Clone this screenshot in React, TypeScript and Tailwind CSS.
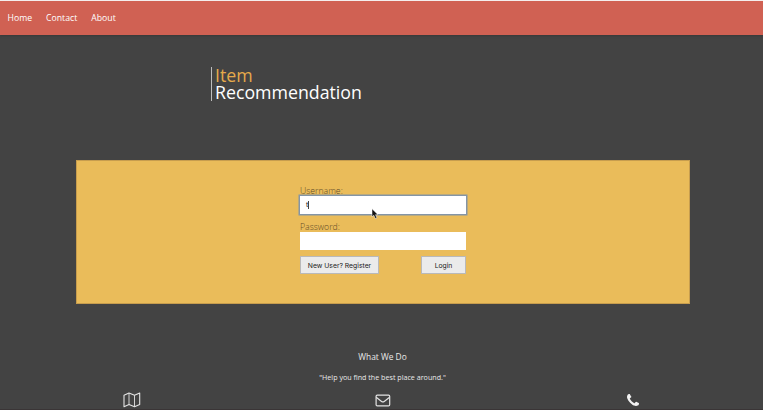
import React from "react";

const MapIcon = () => (
  <svg width="18" height="16" viewBox="0 0 18 16" fill="none" stroke="#e4e4e4" strokeWidth="1.1" strokeLinejoin="round">
    <path d="M1 3.2 6 1l5.5 2.2L16.7 1v11.6l-5.2 2.2L6 12.6 1 14.8z" />
    <path d="M6 1v11.6M11.5 3.2v11.6" strokeWidth="0.9" />
  </svg>
);

const MailIcon = () => (
  <svg width="16" height="13" viewBox="0 0 16 13" fill="none" stroke="#e4e4e4" strokeWidth="1.2" strokeLinejoin="round">
    <rect x="1.1" y="1.1" width="13.6" height="10.8" rx="1.2" />
    <path d="M1.2 3.3 6.6 7.4q1.3 1 2.6 0l5.4-4.1" />
  </svg>
);

const PhoneIcon = () => (
  <svg width="12" height="12" viewBox="0 0 1408 1408" fill="#f2f2f2">
    <path d="M1408 1112q0 27-10 70.5t-21 68.5q-21 50-122 106-94 51-186 51-27 0-53-3.5t-57.5-12.5-47-14.5-55.5-20.5-49-18q-98-35-175-83-127-79-264-216t-216-264q-48-77-83-175-3-9-18-49t-20.5-55.5-14.5-47-12.5-57.5-3.5-53q0-92 51-186 56-101 106-122 25-11 68.5-21t70.5-10q14 0 21 3 18 6 53 76 11 19 30 54t35 63.5 31 53.5q3 4 17.5 25t21.5 35.5 7 28.5q0 20-28.5 50t-62 55-62 53-28.5 46q0 9 5 22.5t8.5 20.5 14 24 11.5 19q76 137 174 235t235 174q2 1 19 11.5t24 14 20.5 8.5 22.5 5q18 0 46-28.5t53-62 55-62 50-28.5q14 0 28.5 7t35.5 21.5 25 17.5q25 15 53.5 31t63.5 35 54 30q70 35 76 53 3 7 3 21z" />
  </svg>
);

const Cursor = () => (
  <svg className="absolute left-[71px] top-[12px]" width="8" height="12" viewBox="0 0 8 12">
    <path d="M1 .8v8l1.8-1.5 1.5 3.3 1.6-.7-1.4-3.2H7z" fill="#151515" stroke="#fff" strokeWidth=".5" />
  </svg>
);

export default function App() {
  return (
    <div className="flex h-[410px] w-full flex-col overflow-hidden border-t border-[#f4eeed] bg-[#434343] font-['Open_Sans',sans-serif] text-white">
      <nav className="flex h-[34px] shrink-0 items-center gap-[14px] bg-[#d06153] pb-px pl-[7.5px] text-[8.7px] leading-3 shadow-[0_1px_2px_#383838]">
        <a>Home</a>
        <a>Contact</a>
        <a>About</a>
      </nav>
      <header className="ml-[211px] mt-8 h-[34px] w-fit shrink-0 border-l border-[#bdbdbd] pl-[3px] text-[17.75px] leading-[17px]">
        <div className="text-[#e5aa4b]">Item</div>
        <div>Recommendation</div>
      </header>
      <main className="ml-[76px] mt-[59px] h-[144px] w-[614px] shrink-0 border border-[#c79d4e] bg-[#eabc5a] pl-[223px] pt-[25px]">
        <form className="w-[166px] text-[8.7px] font-light leading-[10px] text-[#5f4b28]">
          <label className="block">Username:</label>
          <div className="relative flex h-[18px] items-center bg-white pl-[6px] font-['Liberation_Sans',sans-serif] text-[7.5px] font-normal text-[#222] shadow-[0_0_0_1.5px_#8495a6]">
            t<span className="h-2 w-px bg-[#444]" />
            <Cursor />
          </div>
          <label className="mt-2 block">Password:</label>
          <div className="h-[18px] bg-white" />
          <div className="mt-[6px] flex justify-between font-['Inter',sans-serif] text-[6.8px] font-normal text-[#222]">
            <button type="button" className="h-[18px] w-[79px] whitespace-nowrap border border-[#b9b9b9] bg-[#ebebeb] pt-px">New User? Register</button>
            <button type="button" className="h-[18px] w-[45px] border border-[#b9b9b9] bg-[#ebebeb] pt-px">Login</button>
          </div>
        </form>
      </main>
      <section className="mt-[47px] shrink-0 pl-[2px] text-center text-[#e9e9e9]">
        <h2 className="text-[8.4px] leading-3">What We Do</h2>
        <p className="mt-[9px] text-[7.15px] leading-[10px]">"Help you find the best place around."</p>
      </section>
      <div className="mt-[10px] flex h-[16px] shrink-0 justify-between pl-[123px] pr-[124px]">
        <MapIcon />
        <div className="-ml-[3px] pt-[2px]"><MailIcon /></div>
        <div className="pt-[2px]"><PhoneIcon /></div>
      </div>
      <div className="mt-auto h-px shrink-0 bg-[#3a3536]" />
    </div>
  );
}
